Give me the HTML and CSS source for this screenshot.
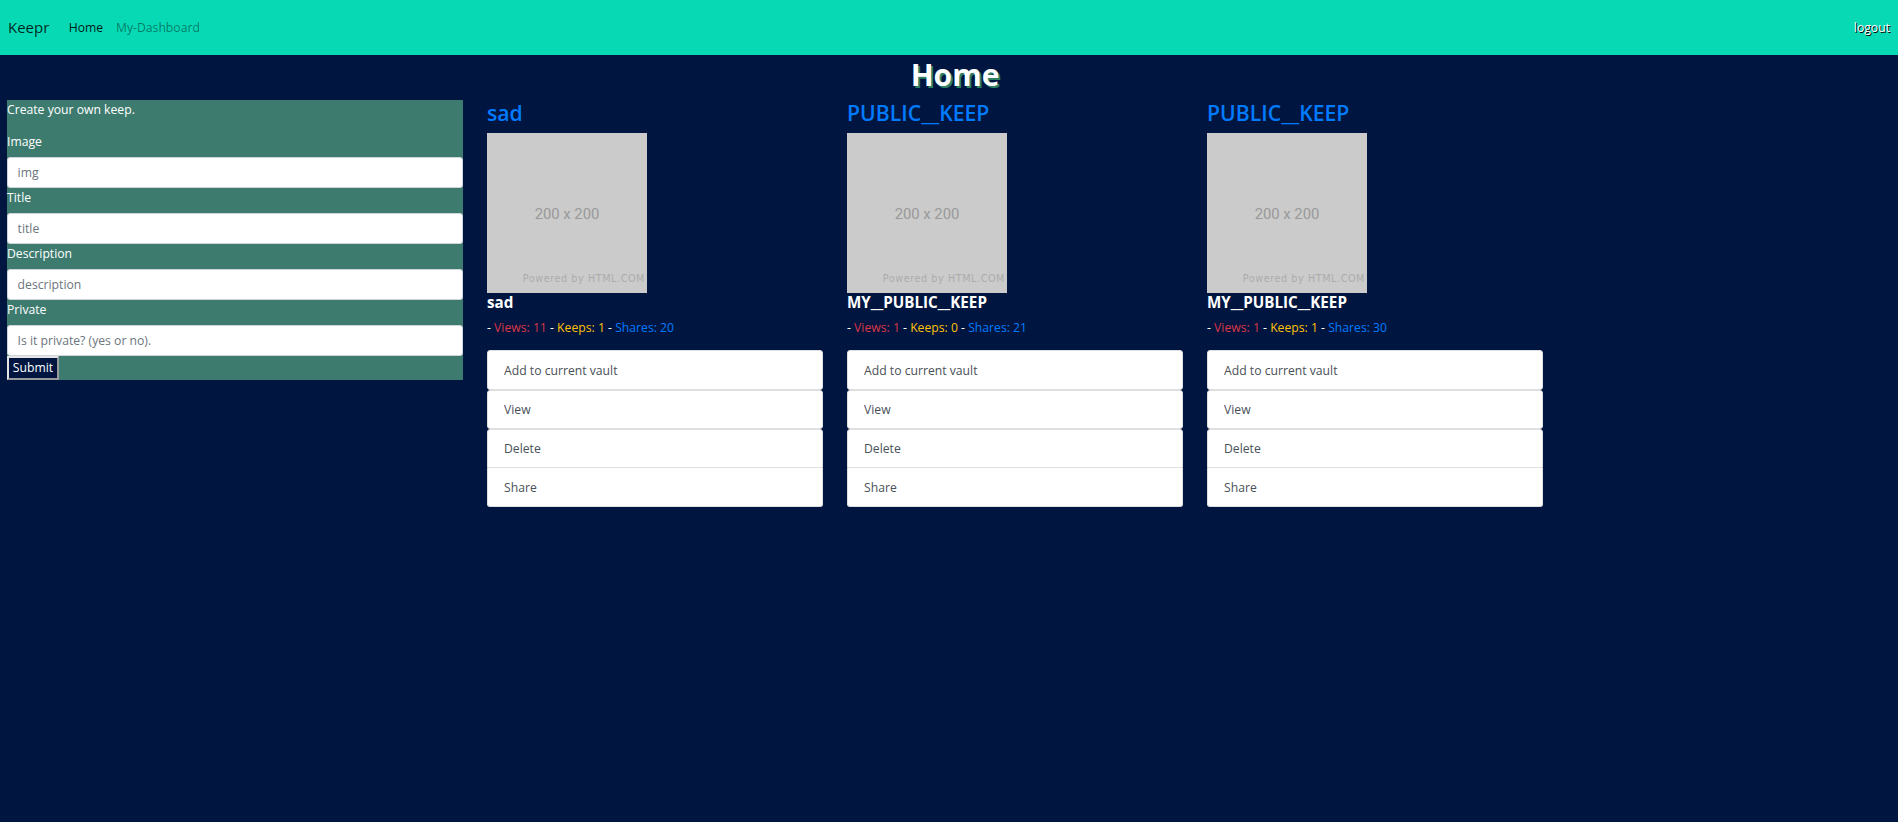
FILE: index.html
```html
<!DOCTYPE html>
<html lang="en">
<head>
<meta charset="utf-8">
<title>Keepr</title>
<link rel="stylesheet" href="styles.css">
</head>
<body>
<nav class="navbar">
  <a class="brand">Keepr</a>
  <a class="nav-link active">Home</a>
  <a class="nav-link">My-Dashboard</a>
  <a class="logout">logout</a>
</nav>
<h1 class="page-title">Home</h1>
<main class="main">
  <form class="keep-form">
    <p class="form-intro">Create your own keep.</p>
    <label class="form-label">Image</label>
    <input class="form-input" type="text" placeholder="img">
    <label class="form-label">Title</label>
    <input class="form-input" type="text" placeholder="title">
    <label class="form-label">Description</label>
    <input class="form-input" type="text" placeholder="description">
    <label class="form-label">Private</label>
    <input class="form-input" type="text" placeholder="Is it private? (yes or no).">
    <button class="submit-btn" type="button">Submit</button>
  </form>

  <section class="keeps">
    <article class="keep">
      <h3 class="keep-title">sad</h3>
      <div class="placeholder"><span class="ph-size">200 x 200</span><span class="ph-powered">Powered by HTML.COM</span></div>
      <h5 class="keep-name">sad</h5>
      <p class="stats">- <span class="views">Views: 11</span> - <span class="keeps-n">Keeps: 1</span> - <span class="shares">Shares: 20</span></p>
      <div class="actions">
        <div class="action single">Add to current vault</div>
        <div class="action single">View</div>
        <div class="group">
          <div class="action">Delete</div>
          <div class="action">Share</div>
        </div>
      </div>
    </article>
    <article class="keep">
      <h3 class="keep-title">PUBLIC__KEEP</h3>
      <div class="placeholder"><span class="ph-size">200 x 200</span><span class="ph-powered">Powered by HTML.COM</span></div>
      <h5 class="keep-name">MY__PUBLIC__KEEP</h5>
      <p class="stats">- <span class="views">Views: 1</span> - <span class="keeps-n">Keeps: 0</span> - <span class="shares">Shares: 21</span></p>
      <div class="actions">
        <div class="action single">Add to current vault</div>
        <div class="action single">View</div>
        <div class="group">
          <div class="action">Delete</div>
          <div class="action">Share</div>
        </div>
      </div>
    </article>
    <article class="keep">
      <h3 class="keep-title">PUBLIC__KEEP</h3>
      <div class="placeholder"><span class="ph-size">200 x 200</span><span class="ph-powered">Powered by HTML.COM</span></div>
      <h5 class="keep-name">MY__PUBLIC__KEEP</h5>
      <p class="stats">- <span class="views">Views: 1</span> - <span class="keeps-n">Keeps: 1</span> - <span class="shares">Shares: 30</span></p>
      <div class="actions">
        <div class="action single">Add to current vault</div>
        <div class="action single">View</div>
        <div class="group">
          <div class="action">Delete</div>
          <div class="action">Share</div>
        </div>
      </div>
    </article>
  </section>
</main>
</body>
</html>
```
FILE: styles.css
```css
* { box-sizing: border-box; }
html, body { margin: 0; padding: 0; }
body {
  background: #001640;
  color: #fff;
  font-family: "Open Sans", "Noto Sans", sans-serif;
  font-size: 12.2px;
  line-height: 19.2px;
  min-height: 822px;
}
.navbar {
  height: 55px;
  background: #06d9b4;
  display: flex;
  align-items: center;
  padding: 0 8px;
}
.brand {
  font-size: 15px;
  color: rgba(0,0,0,.85);
  margin-right: 13px;
}
.nav-link {
  padding: 0 6.4px;
  color: rgba(0,0,0,.45);
}
.nav-link.active { color: rgba(0,0,0,.9); }
.logout {
  margin-left: auto;
  color: #fff;
  text-shadow: 1px 1px 0 #000;
}
.page-title {
  margin: 0 0 5.6px;
  padding: 1px 0 0 12px;
  text-align: center;
  font-size: 30px;
  line-height: 38px;
  font-weight: 700;
  color: #fff;
  text-shadow: 2px 2px 0 #2f8062;
}
.main {
  display: flex;
  align-items: flex-start;
  gap: 24px;
  padding-left: 7px;
}
.keep-form {
  width: 456px;
  background: #3e7b6f;
  display: flex;
  flex-direction: column;
  align-items: flex-start;
}
.form-intro { margin: 0 0 12.8px; }
.form-label { margin-bottom: 6.4px; }
.form-input {
  width: 100%;
  height: 30.4px;
  border: 1px solid #ced4da;
  border-radius: 3px;
  padding: 0 9.6px;
  font-family: inherit;
  font-size: 12.2px;
  color: #495057;
  background: #fff;
}
.form-input::placeholder { color: #6c757d; }
.submit-btn {
  height: 24px;
  width: 52px;
  padding: 0;
  background: #001640;
  color: #fff;
  font-family: inherit;
  font-size: 12.2px;
  border: 2px solid;
  border-color: #e6e6e6 #9a9a9a #9a9a9a #e6e6e6;
}
.keeps {
  display: flex;
  gap: 24px;
}
.keep { width: 336px; }
.keep-title {
  margin: 0 0 6.4px;
  font-size: 21.2px;
  line-height: 26.9px;
  font-weight: 600;
  color: #007bff;
}
.placeholder {
  width: 160px;
  height: 160px;
  background: #cbcbcb;
  position: relative;
  display: flex;
  align-items: center;
  justify-content: center;
}
.ph-size {
  font-family: Roboto, "Liberation Sans", sans-serif;
  font-size: 14.8px;
  color: #999;
  margin-top: 4px;
}
.ph-powered {
  position: absolute;
  right: 2px;
  bottom: 5px;
  font-family: "DejaVu Sans", Verdana, sans-serif;
  font-size: 9.6px;
  letter-spacing: .6px;
  color: #ababab;
}
.keep-name {
  margin: 0 0 6.4px;
  font-size: 15.2px;
  line-height: 19.2px;
  font-weight: 700;
}
.stats { margin: 0 0 12.8px; }
.views { color: #dc3545; }
.keeps-n { color: #ffc107; }
.shares { color: #007bff; }
.actions { display: flex; flex-direction: column; }
.action {
  background: #fff;
  color: #495057;
  padding: 9.6px 16px;
  border: 1px solid #dfdfdf;
  height: 39.2px;
}
.action.single { border-radius: 3px; }
.group .action:first-child { border-radius: 3px 3px 0 0; }
.group .action:last-child { border-radius: 0 0 3px 3px; border-top: 0; }
```
